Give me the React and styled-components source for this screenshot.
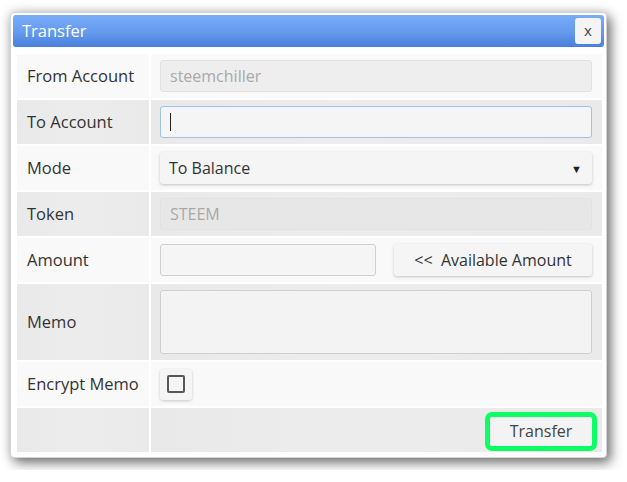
import React from "react";
import styled, { createGlobalStyle } from "styled-components";

const Global = createGlobalStyle`
  html, body { margin: 0; padding: 0; background: #ffffff; }
  body { font-family: "Open Sans", "Noto Sans", "Liberation Sans", sans-serif; }
  * { box-sizing: border-box; }
`;

const Page = styled.div`
  padding: 12px 10px;
`;

const Dialog = styled.div`
  width: 597px;
  background: #ffffff;
  border: 1px solid #d4d4d4;
  border-radius: 4px;
  padding: 2px 2px 5px;
  box-shadow: 4px 5px 12px rgba(0, 0, 0, 0.5), 0 0 12px rgba(0, 0, 0, 0.18);
`;

const TitleBar = styled.div`
  height: 32px;
  display: flex;
  align-items: center;
  justify-content: space-between;
  padding: 0 3px 0 9px;
  border-radius: 3px;
  background: linear-gradient(to bottom, #7aacfa 0%, #6499ec 55%, #4a7fdb 100%);
  color: #ffffff;
  font-size: 16.5px;
`;

const TitleText = styled.span`
  padding-bottom: 2px;
`;

const CloseButton = styled.button`
  width: 26px;
  height: 26px;
  border: none;
  border-radius: 3px;
  background: #f4f4f4;
  color: #444;
  font-family: inherit;
  font-size: 15px;
  line-height: 1;
  padding: 0 0 2px;
`;

const Body = styled.div`
  padding: 7px 4px 0;
`;

const Grid = styled.div`
  display: grid;
  grid-template-columns: 132px 1fr;
  gap: 2px;
  background: #ffffff;
`;

const Cell = styled.div`
  display: flex;
  align-items: center;
  height: ${(p) => (p.$tall ? 76 : 44)}px;
  background: ${(p) =>
    p.$dark
      ? "linear-gradient(to right, #e9e9e9, #ececec 40%, #eaeaea)"
      : "#f9f9f9"};
  padding: 0 10px 0 ${(p) => (p.$value ? 9 : 10)}px;
  gap: 18px;
  justify-content: ${(p) => (p.$end ? "flex-end" : "flex-start")};
`;

const Label = styled.span`
  color: #333;
  font-size: 16.5px;
  padding-bottom: 2px;
`;

const Field = styled.div`
  flex: ${(p) => (p.$w ? "0 0 auto" : "1")};
  width: ${(p) => (p.$w ? `${p.$w}px` : "auto")};
  height: 32px;
  display: flex;
  align-items: center;
  padding: 0 9px;
  border-radius: 3px;
  font-size: 16px;
  color: ${(p) => (p.$muted ? "#a9a9a9" : "#333")};
  background: ${(p) => p.$bg || "#f5f5f5"};
  border: 1px solid ${(p) => p.$border || "#cfcfcf"};
`;

const Cursor = styled.span`
  width: 1px;
  height: 18px;
  background: #222;
`;

const Raised = styled.div`
  flex: ${(p) => (p.$w ? "0 0 auto" : "1")};
  width: ${(p) => (p.$w ? `${p.$w}px` : "auto")};
  height: 32px;
  display: flex;
  align-items: center;
  justify-content: ${(p) => p.$justify || "space-between"};
  padding: 0 9px;
  border-radius: 3px;
  background: #f5f5f5;
  box-shadow: 0 1px 3px rgba(0, 0, 0, 0.22);
  color: #333;
  font-size: 16px;
`;

const Arrow = styled.span`
  font-size: 11px;
  color: #222;
  padding-right: 1px;
`;

const Memo = styled.div`
  flex: 1;
  height: 64px;
  border: 1px solid #cfcfcf;
  border-radius: 3px;
  background: #f3f3f3;
  align-self: center;
`;

const CheckButton = styled.div`
  width: 32px;
  height: 31px;
  display: flex;
  align-items: center;
  justify-content: center;
  border-radius: 3px;
  background: #f5f5f5;
  box-shadow: 0 1px 3px rgba(0, 0, 0, 0.2);
`;

const Box = styled.span`
  width: 18px;
  height: 18px;
  border: 2px solid #585858;
  border-radius: 2px;
`;

const TransferButton = styled.button`
  width: 112px;
  height: 39px;
  margin-right: -5px;
  margin-top: 2px;
  border: 5px solid #0dff66;
  border-radius: 7px;
  background: #f3f3f3;
  color: #444;
  font-family: inherit;
  font-size: 16px;
  padding: 0 0 1px;
`;

export default function App() {
  return (
    <Page>
      <Global />
      <Dialog>
        <TitleBar>
          <TitleText>Transfer</TitleText>
          <CloseButton>x</CloseButton>
        </TitleBar>
        <Body>
          <Grid>
            <Cell><Label>From Account</Label></Cell>
            <Cell $value>
              <Field $muted $bg="#eeeeee" $border="#e2e2e2">steemchiller</Field>
            </Cell>

            <Cell $dark><Label>To Account</Label></Cell>
            <Cell $dark $value>
              <Field $border="#9fc3e8"><Cursor /></Field>
            </Cell>

            <Cell><Label>Mode</Label></Cell>
            <Cell $value>
              <Raised>
                <span>To Balance</span>
                <Arrow>▼</Arrow>
              </Raised>
            </Cell>

            <Cell $dark><Label>Token</Label></Cell>
            <Cell $dark $value>
              <Field $muted $bg="#e7e7e7" $border="#e2e2e2">STEEM</Field>
            </Cell>

            <Cell><Label>Amount</Label></Cell>
            <Cell $value>
              <Field $w={216} />
              <Raised $w={198} $justify="center">&lt;&lt;&nbsp;&nbsp;Available Amount</Raised>
            </Cell>

            <Cell $dark $tall><Label>Memo</Label></Cell>
            <Cell $dark $tall $value>
              <Memo />
            </Cell>

            <Cell><Label>Encrypt Memo</Label></Cell>
            <Cell $value>
              <CheckButton><Box /></CheckButton>
            </Cell>

            <Cell $dark />
            <Cell $dark $value $end>
              <TransferButton>Transfer</TransferButton>
            </Cell>
          </Grid>
        </Body>
      </Dialog>
    </Page>
  );
}
